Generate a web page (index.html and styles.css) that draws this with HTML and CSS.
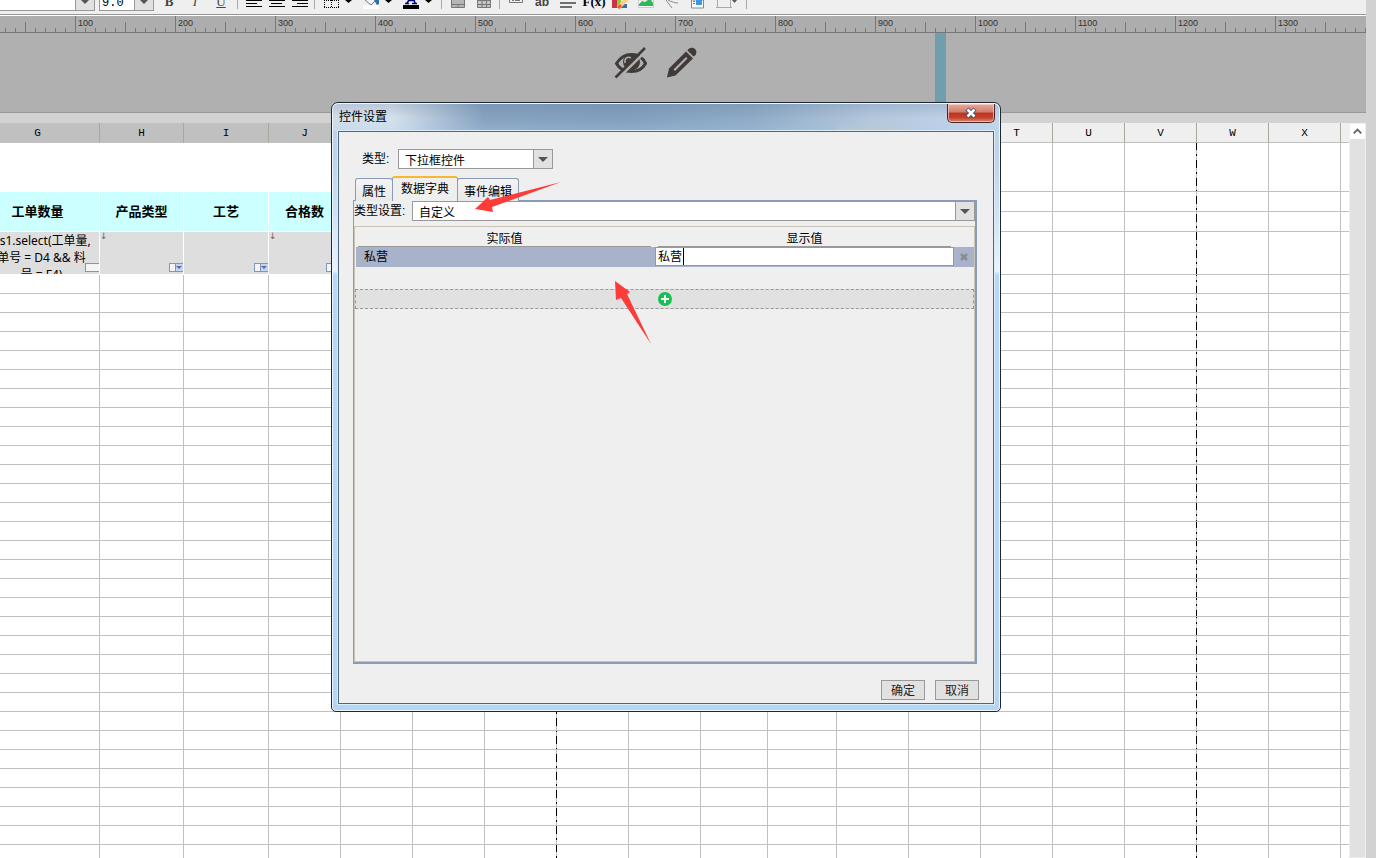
FILE: index.html
```html
<!DOCTYPE html>
<html lang="zh-CN">
<head>
<meta charset="utf-8">
<title>控件设置</title>
<link rel="stylesheet" href="styles.css">
</head>
<body>
<main class="app">
  <div class="toolbar">
    <div class="combo font-combo"><select aria-label="字体"><option></option></select><span class="combo-arrow"></span></div>
    <div class="combo size-combo"><select aria-label="字号"><option>9.0</option></select><span class="combo-arrow"></span></div>
    <button class="tool letter" aria-label="加粗"><b>B</b></button>
    <button class="tool letter" aria-label="倾斜"><i>I</i></button>
    <button class="tool letter" aria-label="下划线"><u>U</u></button>
    <span class="sep"></span>
    <button class="tool narrow" aria-label="左对齐"><svg viewBox="0 0 23 14"><path d="M4 .5h16M4 3.5h11M4 6.5h16" stroke="#000"/></svg></button>
    <button class="tool narrow" aria-label="居中"><svg viewBox="0 0 23 14"><path d="M4 .5h16M6 3.5h11M4 6.5h16" stroke="#000"/></svg></button>
    <button class="tool narrow" aria-label="右对齐"><svg viewBox="0 0 23 14"><path d="M4 .5h16M9 3.5h11M4 6.5h16" stroke="#000"/></svg></button>
    <span class="sep"></span>
    <button class="tool split" aria-label="边框"><svg viewBox="0 0 40 14"><path d="M5.500 0v8M12.500 0v8M19.500 0v8M5 .5h15M5 7.500h15" stroke="#000" stroke-dasharray="1 1" fill="none"/><path d="M26 0h7l-3.500 3z"/></svg></button>
    <button class="tool split" aria-label="填充颜色"><svg viewBox="0 0 40 14"><path d="M4 5h16v4H4z" fill="#fff"/><path d="M6 0l6 5 5-5" fill="#f4f4f4" stroke="#777"/><path d="M15 0h5v4l-2 1z" fill="#2d6da8"/><path d="M26 0h7l-3.500 3z"/></svg></button>
    <button class="tool split" aria-label="字体颜色"><svg viewBox="0 0 40 14"><path d="M6 3.500h4M13 3.500h5M8 3l2-3M16 3l-1-3M9 .5h7" stroke="#000080" stroke-width="1.500"/><path d="M4 5h16v4H4z"/><path d="M26 0h7l-3.500 3z"/></svg></button>
    <span class="sep tight"></span>
    <button class="tool" aria-label="合并"><svg viewBox="0 0 26 14"><path d="M6.500 0v7.500h13V0M6.500 4.500h13M13 5v3" fill="#b5b5b5" stroke="#777"/></svg></button>
    <button class="tool" aria-label="拆分"><svg viewBox="0 0 26 14"><path d="M6.500 0v7.500h13V0M6.500 .5h13M6.500 4.500h13M11 0v8M15.500 0v8" fill="#c4c4c4" stroke="#777"/></svg></button>
    <span class="sep tight"></span>
    <button class="tool" aria-label="控件"><svg viewBox="0 0 26 14"><path d="M6.500 0v2.500h13V0M9 .5h2M12 .5h5" fill="none" stroke="#777"/></svg></button>
    <button class="tool letter sans" aria-label="文本"><b>ab</b></button>
    <button class="tool" aria-label="行"><svg viewBox="0 0 26 14"><path d="M5 3h16M5 7h12" stroke="#444" stroke-width="1.500"/></svg></button>
    <button class="tool letter formula-tool" aria-label="公式"><b>F(x)</b></button>
    <button class="tool" aria-label="图表"><svg viewBox="0 0 26 14"><path d="M5 0h5v8H5z" fill="#c8334b"/><path d="M10 0h4v8h-4z" fill="#9ac834"/><path d="M14 4h6v4h-6z" fill="#3070c0"/><path d="M11 8l9-9" stroke="#ffd080" stroke-width="4"/><path d="M11 8l3-3" stroke="#f05a32" stroke-width="3"/></svg></button>
    <button class="tool" aria-label="图片"><svg viewBox="0 0 26 14"><path d="M5.500 0h15v7.500h-15z" fill="#fff" stroke="#ccc"/><path d="M6 4l3-3 3 1 3-2h3l2 3v3H6z" fill="#30b858"/></svg></button>
    <button class="tool" aria-label="斜线"><svg viewBox="0 0 26 14"><path d="M7 0l6 8M9 0c4 2 7 3 10 3" stroke="#888" fill="none"/></svg></button>
    <button class="tool" aria-label="子报表"><svg viewBox="0 0 26 14"><path d="M6.500 0h12v8h-12z" fill="#fff" stroke="#888"/><path d="M11 0h6v5h-6z" fill="#3996e8"/><path d="M8 1.500h2M8 3.500h2" stroke="#777"/></svg></button>
    <button class="tool" aria-label="悬浮元素"><svg viewBox="0 0 26 14"><path d="M6.500 0v7.500h13V0M5 7.500h3M18 7.500h3" fill="none" stroke="#aaa"/><path d="M21 0h5l-2.500 3z" fill="#555"/></svg></button>
    <span class="sep wide"></span>
  </div>

  <div class="ruler">
    <span>100</span><span>200</span><span>300</span><span>400</span><span>500</span><span>600</span><span>700</span><span>800</span><span>900</span><span>1000</span><span>1100</span><span>1200</span><span>1300</span>
  </div>

  <div class="param-pane">
    <svg class="eye" viewBox="0 0 34 32"><path d="M2.500 16.500C7 9 13 7.500 17.500 7.500S28 9 31.500 16.500C28 23 22 24.500 17.500 24.500S6 23 2.500 16.500z" fill="none" stroke="#403b39" stroke-width="3"/><circle cx="17.500" cy="15" r="8.500" fill="#403b39"/><path d="M11 16c-1-5 3-7 6-5" fill="none" stroke="#b0b0b0" stroke-width="1.500"/><path d="M3.500 32L33 3" stroke="#b0b0b0" stroke-width="2.500"/><path d="M1.500 30.500L31 1" stroke="#403b39" stroke-width="2.500"/></svg>
    <svg class="pencil" viewBox="0 0 32 32"><path d="M1 30.500l2-9L20 4.500l7 7L9.500 28.500z" fill="#403b39"/><path d="M21.500 3.500C23 0 27 0 29 2s2 6-1.500 7.500z" fill="#403b39"/><path d="M7.500 22.500L20 10l1.500 1.500L9 24z" fill="#b0b0b0"/></svg>
    <span class="marker"></span>
  </div>

  <div class="workspace">
    <div class="sheet">
      <table class="cells">
        <colgroup>
          <col class="c-124"><col class="c-84"><col class="c-85"><col class="c-72"><col class="c-72"><col class="c-72"><col class="c-72 page-edge"><col class="c-72"><col class="c-72"><col class="c-67"><col class="c-69"><col class="c-72"><col class="c-72"><col class="c-72"><col class="c-72"><col class="c-72 page-edge"><col class="c-72"><col class="c-72"><col>
        </colgroup>
        <thead>
          <tr><th class="sel">G</th><th class="sel">H</th><th class="sel">I</th><th class="sel">J</th><th class="sel">K</th><th class="sel">L</th><th class="sel">M</th><th class="sel">N</th><th class="sel">O</th><th class="sel">P</th><th>Q</th><th>R</th><th>S</th><th>T</th><th>U</th><th>V</th><th>W</th><th>X</th><th></th></tr>
        </thead>
        <tbody id="rows">
          <tr class="r-tall"><td class="blank" colspan="4"></td></tr>
          <tr class="r-half"><td class="head" rowspan="2">工单数量</td><td class="head" rowspan="2">产品类型</td><td class="head" rowspan="2">工艺</td><td class="head" rowspan="2">合格数</td></tr>
          <tr class="r-half"></tr>
          <tr class="r-data">
            <td class="data"><div class="formula">ds1.select(工单量,<br>单号 = D4 &amp;&amp; 料<br>号 = F4)</div><span class="text-mark"></span></td>
            <td class="data"><span class="expand">↓</span><span class="drop-mark"></span></td>
            <td class="data"><span class="drop-mark"></span></td>
            <td class="data"><span class="expand">↓</span><span class="drop-mark"></span></td>
          </tr>
        </tbody>
      </table>
    </div>
    <div class="scrollbar"><button class="scroll-up" aria-label="向上滚动"><svg viewBox="0 0 16 15"><path d="M4 10l4-4 4 4" fill="none" stroke="#666" stroke-width="2"/></svg></button></div>
  </div>
</main>

<section class="dialog" role="dialog" aria-labelledby="dialog-title">
  <header class="titlebar">
    <h1 id="dialog-title">控件设置</h1>
    <button class="close" aria-label="关闭"><svg viewBox="0 0 14 12"><path d="M3 2l8 8M11 2l-8 8" stroke="#4b4f66" stroke-width="4.500"/><path d="M3.500 2.500l7 7M10.500 2.500l-7 7" stroke="#fff" stroke-width="2.500"/></svg></button>
  </header>
  <div class="dialog-body">
    <div class="type-row">
      <label for="type">类型:</label>
      <div class="combo"><select id="type"><option>下拉框控件</option></select><span class="combo-arrow"></span></div>
    </div>
    <div class="tabs" role="tablist">
      <button class="tab" role="tab">属性</button>
      <button class="tab active" role="tab" aria-selected="true">数据字典</button>
      <button class="tab" role="tab">事件编辑</button>
    </div>
    <div class="pane">
      <div class="dict-row">
        <label for="dict">类型设置:</label>
        <div class="combo"><select id="dict"><option>自定义</option></select><span class="combo-arrow"></span></div>
      </div>
      <div class="values">
        <div class="values-head"><span>实际值</span><span>显示值</span></div>
        <div class="value-row">
          <span class="actual">私营</span>
          <div class="editor"><input aria-label="显示值" value="私营"><span class="caret"></span></div>
          <button class="remove" aria-label="删除"><svg viewBox="0 0 10 10"><path d="M2 2l6 6M8 2L2 8" stroke="#8b8c8c" stroke-width="2.500"/></svg></button>
        </div>
        <button class="add" aria-label="添加"><svg viewBox="0 0 14 14"><circle cx="7" cy="7" r="7" fill="#18c054"/><path d="M7 3v8M3 7h8" stroke="#fff" stroke-width="2"/></svg></button>
      </div>
    </div>
    <footer class="actions"><button>确定</button><button>取消</button></footer>
  </div>
  <svg class="pointer pointer-tab" viewBox="0 0 88 32"><path d="M1 28l13-12 2 3L87 1 18 26l1 5z" fill="#fd3b39"/></svg>
  <svg class="pointer pointer-value" viewBox="0 0 38 65"><path d="M1 1l15 11-3 2 24 50L7 18l-5 2z" fill="#fd3b39"/></svg>
</section>
<script src="sheet.js"></script>
</body>
</html>
```

FILE: styles.css
```css
* { box-sizing: border-box; }
html, body { height: 100%; }
body {
  margin: 0;
  overflow: hidden;
  background: #d2d2d2;
  color: #000;
  font: 12px/16px "Liberation Sans", "Noto Sans CJK SC", sans-serif;
}
button, select, input { font: inherit; color: inherit; margin: 0; padding: 0; border: 0; background: none; border-radius: 0; outline: 0; }
svg { display: block; }

.app { height: 100%; margin-right: 10px; display: flex; flex-direction: column; }

/* toolbar */
.toolbar { height: 15px; flex: none; display: flex; background: #efefef; border-bottom: 1px solid #969696; overflow: hidden; }
.combo { display: flex; height: 20px; background: #fff; border: 1px solid #999; }
.combo select { appearance: none; flex: 1; min-width: 0; padding: 3px 0 0 6px; }
.combo-arrow { flex: none; width: 19px; background: #e1e1e1; border-left: 1px solid #999; display: flex; align-items: center; justify-content: center; }
.combo-arrow::before { content: ""; border: 5px solid transparent; border-top-color: #555; border-bottom: 0; }
.toolbar .combo { flex: none; margin-top: -9px; }
.font-combo { width: 95px; border-left: 0; margin-right: 4px; }
.size-combo { width: 55px; margin-right: 2px; font-family: "Liberation Mono", monospace; }
.toolbar .size-combo select { padding-left: 2px; }
.tool { flex: none; width: 26px; height: 14px; }
.tool svg { width: 100%; height: 14px; }
.tool.narrow { width: 23px; }
.tool.split { width: 40px; }
.tool.letter { font: 13px/16px "Liberation Serif", serif; color: #444; margin-top: -8px; height: 20px; }
.tool.sans { font: 12px/16px "Liberation Sans", sans-serif; }
.tool.formula-tool { color: #000; }
.sep { flex: none; width: 8px; height: 9px; background: linear-gradient(#aaa, #aaa) 3px 0 / 1px 100% no-repeat; }
.sep.tight { width: 6px; background-position: 2px 0; }
.sep.wide { width: 16px; background-position: 9px 0; }

/* ruler */
.ruler {
  flex: none;
  height: 18px;
  display: flex;
  padding-left: 75px;
  overflow: hidden;
  border-top: 1px solid #fff;
  border-bottom: 1px solid #777;
  background:
    repeating-linear-gradient(90deg, transparent 0 5px, #777 5px 6px, transparent 6px 10px) 0 100% / 100% 4px no-repeat,
    repeating-linear-gradient(90deg, transparent 0 25px, #777 25px 26px, transparent 26px 100px) 0 100% / 100% 10px no-repeat,
    #adadad;
}
.ruler span { flex: 0 0 100px; border-left: 1px solid #777; padding-left: 2px; font-size: 9px; line-height: 14px; color: #333; }

/* parameter pane */
.param-pane { flex: none; height: 80px; display: flex; padding-left: 614px; background: #b0b0b0; border-bottom: 1px solid #999; }
.eye { width: 34px; height: 32px; margin: 14px 18px 0 0; }
.pencil { width: 32px; height: 32px; margin-top: 14px; }
.marker { width: 11px; margin-left: 237px; background: #6f9eac; }

/* sheet */
.workspace { flex: 1; min-height: 0; display: flex; margin-top: 10px; }
.sheet { flex: 1; min-width: 0; overflow: hidden; background: #fff; }
.cells { width: calc(100% + 24px); margin-left: -24px; table-layout: fixed; border-collapse: separate; border-spacing: 0; }
.c-124 { width: 124px; }
.c-84 { width: 84px; }
.c-85 { width: 85px; }
.c-72 { width: 72px; }
.c-67 { width: 67px; }
.c-69 { width: 69px; }
.cells th { height: 20px; padding: 0; background: #efefef; border-right: 1px solid #aca899; border-bottom: 1px solid #c0c0c0; font: 11px/18px "Liberation Mono", monospace; }
.cells th.sel { background: #c0c0c0; }
.cells td { height: 19px; padding: 0; border-right: 1px solid #c0c0c0; border-bottom: 1px solid #c0c0c0; }
.cells th:last-child, .cells td:last-child { border-right: 0; }
.cells .r-tall td { height: 49px; }
.cells .r-half td { height: 20px; }
.cells .r-data td { height: 43px; }
.cells td.blank, .cells td.head, .cells td.data { border-color: #fff; }
.cells td.head { background: #cff; font-size: 13px; font-weight: bold; text-align: center; }
.cells td.data { position: relative; background: #dedede; vertical-align: top; }
.cells td.page-edge { border-right: 0; }
.cells col.page-edge {
  background: repeating-linear-gradient(#c0c0c0 0 1px, #000 1px 9px, #c0c0c0 9px 13px, #000 13px 15px, #c0c0c0 15px 18px) 100% 0 / 1px 100% no-repeat;
}
.formula { height: 42px; overflow: hidden; padding-left: 8px; text-align: center; white-space: nowrap; font: 12px/17px "Noto Sans", "Noto Sans CJK SC", sans-serif; }
.text-mark, .drop-mark { position: absolute; right: 0; bottom: 2px; width: 14px; height: 9px; border: 1px solid #7f96bb; border-right: 0; background: #f4f4f4; }
.drop-mark { background: linear-gradient(90deg, #f4f4f4 5px, #7f96bb 5px 6px, #c3d5f2 6px); }
.drop-mark::after { content: ""; position: absolute; right: 1px; top: 2px; border: 3px solid transparent; border-top-color: #5a6ca0; border-bottom: 0; }
.expand { position: absolute; left: 0; top: 0; font: 9px/9px "DejaVu Sans", sans-serif; color: #666; }
.scrollbar { flex: none; width: 17px; background: #e1e1e1; border: 1px solid #efefef; }
.scroll-up { display: block; width: 100%; height: 15px; background: #fff; }

/* dialog */
.dialog {
  position: absolute;
  left: 331px;
  top: 102px;
  width: 670px;
  padding: 0 6px 7px;
  border: 1px solid #1d2834;
  border-radius: 7px 7px 5px 5px;
  background: linear-gradient(#c8d3e0, #bdd3ec 50px, #cfe2f5 110px, #e8f4ff 168px, #b5d8fb 172px, #b5d5f5);
  box-shadow: inset 0 0 0 1px #eef6fc;
}
.titlebar {
  display: flex;
  justify-content: space-between;
  height: 28px;
  margin: 0 -5px;
  padding: 0 4px 0 6px;
  border-top: 1px solid #eef6fc;
  border-radius: 6px 6px 0 0;
  background:
    linear-gradient(transparent, rgba(196, 200, 190, .6)) 505px 100% / 70px 8px no-repeat,
    linear-gradient(rgba(80, 110, 145, .2), transparent 14px, rgba(170, 210, 250, .25)),
    linear-gradient(90deg, #d3dde8, #d5e0eb 60px, #87a2bf 150px, #829fbd 290px, #8faac5 420px, #b4c7dc 540px, #c5d6e9);
}
.titlebar h1 { margin: 0; font-size: 12px; font-weight: normal; line-height: 26px; }
.close {
  width: 48px;
  height: 19px;
  display: flex;
  align-items: center;
  justify-content: center;
  border: 1px solid #47262b;
  border-top: 0;
  border-radius: 0 0 5px 5px;
  background: linear-gradient(#e5aca0, #d37c6c 45%, #b93522 50%, #c5412b 75%, #d98a6f);
  box-shadow: inset 0 0 0 1px rgba(255, 220, 210, .6);
}
.close svg { width: 14px; height: 12px; }
.dialog-body { padding: 17px 14px 3px; border: 1px solid #50667e; box-shadow: 0 0 0 1px #dcecf9; background: #efefef; }
.type-row { display: flex; padding-left: 9px; }
.type-row label { width: 36px; line-height: 21px; }
.type-row .combo { width: 155px; }
.tabs { display: flex; align-items: flex-end; padding-left: 2px; margin-top: 6px; }
.tab { height: 23px; padding: 3px 6px 0; border: 1px solid #8a9bb5; border-bottom: 0; border-radius: 3px 3px 0 0; background: linear-gradient(#f4f4f4, #e9e9e9); }
.tab + .tab { margin-left: -1px; }
.tab.active { position: relative; height: 25px; padding: 0 8px 2px; border-top: 2px solid #f5b82e; background: #efefef; }
.pane { height: 464px; display: flex; flex-direction: column; border: 1px solid #8a9bb5; border-right-width: 2px; border-bottom-width: 2px; margin: -1px 2px 0 0; }
.dict-row { display: flex; }
.dict-row label { width: 58px; line-height: 21px; white-space: nowrap; }
.dict-row .combo { flex: 1; }
.values { flex: 1; margin-top: 4px; border: 1px solid #c9c4b4; }
.values-head { display: grid; grid-template-columns: 1fr 1fr; gap: 7px; padding: 2px 23px 0 3px; text-align: center; }
.values-head span { height: 18px; line-height: 20px; border-bottom: 1px solid #999; }
.value-row { display: grid; grid-template-columns: 1fr 1fr 20px; height: 20px; margin: 0 0 0 1px; background: #a8b3cb; }
.actual { padding-left: 8px; line-height: 20px; }
.editor { display: flex; height: 19px; padding-left: 2px; background: #fff; border: 1px solid #999; }
.editor input { width: 25px; }
.caret { width: 1px; background: #000; }
.remove { display: flex; align-items: center; justify-content: center; }
.remove svg { width: 10px; height: 10px; }
.add { width: 100%; height: 20px; margin-top: 22px; display: flex; align-items: center; justify-content: center; border: 1px dashed #999; background: #e1e1e1; }
.add svg { width: 14px; height: 14px; }
.actions { display: flex; justify-content: flex-end; gap: 10px; padding-top: 16px; }
.actions button { width: 44px; height: 20px; padding-top: 1px; border: 1px solid #999; background: #e1e1e1; color: #222; }

/* arrows drawn over the dialog */
.pointer { position: absolute; pointer-events: none; }
.pointer-tab { left: 142px; top: 78px; width: 88px; height: 32px; }
.pointer-value { left: 282px; top: 177px; width: 38px; height: 65px; }
```

FILE: sheet.js
```js
const body = document.getElementById("rows");
const COLUMNS = 19;
const EMPTY_ROWS = 60;
const PAGE_EDGES = [6, 15];

function addCells(row, from) {
  for (let c = from; c < COLUMNS; c++) {
    const cell = document.createElement("td");
    if (PAGE_EDGES.includes(c)) cell.className = "page-edge";
    row.appendChild(cell);
  }
}

for (const row of [...body.rows]) addCells(row, 4);
for (let r = 0; r < EMPTY_ROWS; r++) {
  const row = document.createElement("tr");
  addCells(row, 0);
  body.appendChild(row);
}
```
